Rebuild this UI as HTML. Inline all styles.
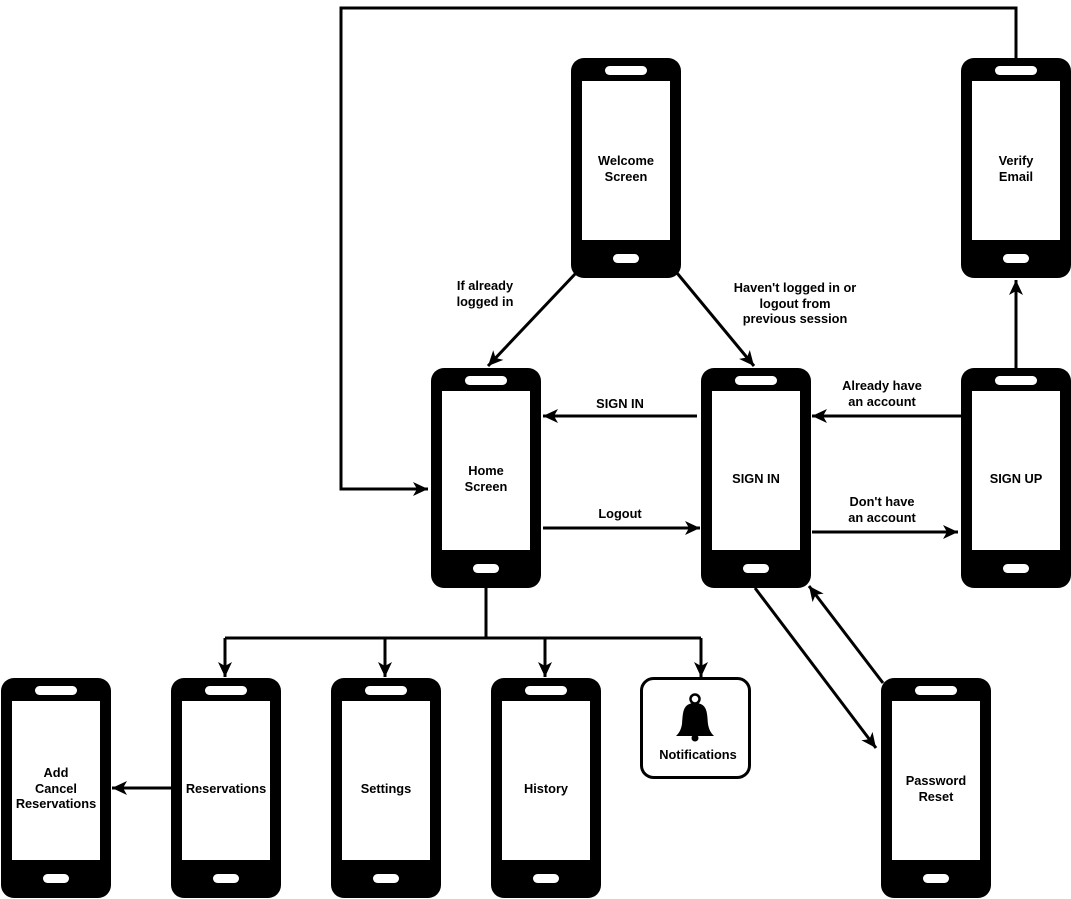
<!DOCTYPE html>
<html><head><meta charset="utf-8"><style>
html,body{margin:0;padding:0;background:#fff;}
svg{display:block;}
text{font-family:"Liberation Sans",Arial,sans-serif;font-weight:bold;font-size:12.8px;fill:#000;text-anchor:middle;}
</style></head><body>
<svg width="1071" height="899" viewBox="0 0 1071 899" xmlns="http://www.w3.org/2000/svg">
<defs>
<marker id="a" markerUnits="userSpaceOnUse" markerWidth="18" markerHeight="16" refX="16" refY="8" orient="auto">
<path d="M16,8 L1,1 L5,8 L1,15 Z" fill="#000"/>
</marker>
<symbol id="ph" viewBox="0 0 110 220">
<rect x="0" y="0" width="110" height="220" rx="13" fill="#000"/>
<rect x="11" y="23" width="88" height="159" fill="#fff"/>
<rect x="34" y="8" width="42" height="9" rx="4.5" fill="#fff"/>
<rect x="42" y="196" width="26" height="9" rx="4.5" fill="#fff"/>
</symbol>
</defs>
<g fill="none" stroke="#000" stroke-width="3">
<path d="M1016,58 V8 H341 V489 H428" marker-end="url(#a)"/>
<path d="M576,273 L488,366" marker-end="url(#a)"/>
<path d="M677,273 L754,366" marker-end="url(#a)"/>
<path d="M697,416 H543" marker-end="url(#a)"/>
<path d="M543,528 H700" marker-end="url(#a)"/>
<path d="M961,416 H812" marker-end="url(#a)"/>
<path d="M812,532 H958" marker-end="url(#a)"/>
<path d="M1016,368 V280" marker-end="url(#a)"/>
<path d="M755,588 L876,748" marker-end="url(#a)"/>
<path d="M883,683 L809,586" marker-end="url(#a)"/>
<path d="M486,588 V638"/>
<path d="M225,638 H701"/>
<path d="M225,638 V677" marker-end="url(#a)"/>
<path d="M385,638 V677" marker-end="url(#a)"/>
<path d="M545,638 V677" marker-end="url(#a)"/>
<path d="M701,638 V677" marker-end="url(#a)"/>
<path d="M171,788 H112" marker-end="url(#a)"/>
</g>
<use href="#ph" x="571" y="58" width="110" height="220"/>
<use href="#ph" x="961" y="58" width="110" height="220"/>
<use href="#ph" x="431" y="368" width="110" height="220"/>
<use href="#ph" x="701" y="368" width="110" height="220"/>
<use href="#ph" x="961" y="368" width="110" height="220"/>
<use href="#ph" x="1" y="678" width="110" height="220"/>
<use href="#ph" x="171" y="678" width="110" height="220"/>
<use href="#ph" x="331" y="678" width="110" height="220"/>
<use href="#ph" x="491" y="678" width="110" height="220"/>
<use href="#ph" x="881" y="678" width="110" height="220"/>
<rect x="641.5" y="678.5" width="108" height="99" rx="12" fill="#fff" stroke="#000" stroke-width="3"/>
<g fill="#000">
<circle cx="695" cy="699" r="4.5" fill="none" stroke="#000" stroke-width="2.5"/>
<path d="M695,703 C682,703 683,714 682,724 C681,730 679,733 676,736 H714 C711,733 709,730 708,724 C707,714 708,703 695,703 Z"/>
<circle cx="695" cy="738" r="3.5"/>
</g>
<text x="698" y="759">Notifications</text>
<text x="626" y="165">Welcome</text><text x="626" y="181">Screen</text>
<text x="1016" y="165">Verify</text><text x="1016" y="181">Email</text>
<text x="486" y="475">Home</text><text x="486" y="491">Screen</text>
<text x="756" y="483">SIGN IN</text>
<text x="1016" y="483">SIGN UP</text>
<text x="56" y="777">Add</text><text x="56" y="793">Cancel</text><text x="56" y="808">Reservations</text>
<text x="226" y="793">Reservations</text>
<text x="386" y="793">Settings</text>
<text x="546" y="793">History</text>
<text x="936" y="785">Password</text><text x="936" y="801">Reset</text>
<text x="485" y="290">If already</text><text x="485" y="306">logged in</text>
<text x="795" y="292">Haven't logged in or</text><text x="795" y="308">logout from</text><text x="795" y="323">previous session</text>
<text x="620" y="408">SIGN IN</text>
<text x="620" y="518">Logout</text>
<text x="882" y="390">Already have</text><text x="882" y="406">an account</text>
<text x="882" y="506">Don't have</text><text x="882" y="522">an account</text>
</svg>
</body></html>
